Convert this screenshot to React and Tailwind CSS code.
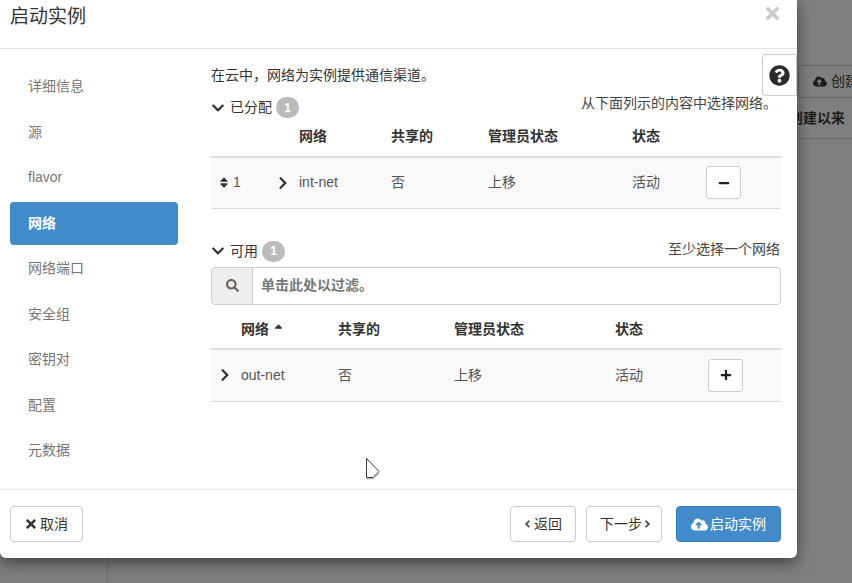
import {
  FaChevronDown,
  FaChevronRight,
  FaCloudUploadAlt,
  FaMinus,
  FaPlus,
  FaQuestionCircle,
  FaSearch,
  FaSort,
  FaSortUp,
  FaTimes,
  FaAngleLeft,
  FaAngleRight,
} from 'react-icons/fa';

const FONT = 'font-["Liberation_Sans","Noto_Sans_CJK_SC",sans-serif]';

const steps = ['详细信息', '源', 'flavor', '网络', '网络端口', '安全组', '密钥对', '配置', '元数据'];

function Badge() {
  return (
    <span className="ml-[4px] flex h-[21px] w-[23px] items-center justify-center rounded-full bg-[#bbbbbb] text-[12px] font-bold text-white">
      1
    </span>
  );
}

function SectionTitle({ label }) {
  return (
    <div className="flex items-center text-[14px] text-[#333333]">
      <FaChevronDown className="mr-[5px] h-[14px] w-[14px] text-[#333333]" />
      <span>{label}</span>
      <Badge />
    </div>
  );
}

function SquareButton({ children }) {
  return (
    <button className="flex h-[33px] w-[35px] items-center justify-center rounded-[3px] border border-[#cccccc] bg-white text-[#222222]">
      {children}
    </button>
  );
}

function AllocatedTable() {
  return (
    <table className="w-[570px] table-fixed border-collapse text-[14px]">
      <colgroup>
        <col className="w-[58px]" />
        <col className="w-[22px]" />
        <col className="w-[92px]" />
        <col className="w-[97px]" />
        <col className="w-[144px]" />
        <col className="w-[74px]" />
        <col className="w-[83px]" />
      </colgroup>
      <thead>
        <tr className="h-[39px] border-b-2 border-[#dddddd] text-left font-bold text-[#333333]">
          <th></th>
          <th></th>
          <th className="px-2 pb-[9px] align-bottom">网络</th>
          <th className="px-2 pb-[9px] align-bottom">共享的</th>
          <th className="px-2 pb-[9px] align-bottom">管理员状态</th>
          <th className="px-2 pb-[9px] align-bottom">状态</th>
          <th></th>
        </tr>
      </thead>
      <tbody>
        <tr className="h-[51px] border-b border-[#dddddd] bg-[#f9f9f9] text-[#555555]">
          <td className="px-2">
            <span className="flex items-center gap-[4px]">
              <FaSort className="h-[13px] w-[10px] text-[#333333]" />1
            </span>
          </td>
          <td className="px-2">
            <FaChevronRight className="h-[14px] w-[12px] text-[#333333]" />
          </td>
          <td className="px-2">int-net</td>
          <td className="px-2">否</td>
          <td className="px-2">上移</td>
          <td className="px-2">活动</td>
          <td className="px-2">
            <SquareButton>
              <FaMinus className="h-[12px] w-[12px]" />
            </SquareButton>
          </td>
        </tr>
      </tbody>
    </table>
  );
}

function AvailableTable() {
  return (
    <table className="w-[570px] table-fixed border-collapse text-[14px]">
      <colgroup>
        <col className="w-[22px]" />
        <col className="w-[97px]" />
        <col className="w-[116px]" />
        <col className="w-[161px]" />
        <col className="w-[93px]" />
        <col className="w-[81px]" />
      </colgroup>
      <thead>
        <tr className="h-[44px] border-b-2 border-[#dddddd] text-left font-bold text-[#333333]">
          <th></th>
          <th className="px-2 pb-[8px] align-bottom">
            <span className="flex items-center gap-[4px]">
              网络
              <FaSortUp className="h-[13px] w-[11px]" />
            </span>
          </th>
          <th className="px-2 pb-[8px] align-bottom">共享的</th>
          <th className="px-2 pb-[8px] align-bottom">管理员状态</th>
          <th className="px-2 pb-[8px] align-bottom">状态</th>
          <th></th>
        </tr>
      </thead>
      <tbody>
        <tr className="h-[53px] border-b border-[#dddddd] bg-[#f9f9f9] text-[#555555]">
          <td className="px-2">
            <FaChevronRight className="h-[14px] w-[12px] text-[#333333]" />
          </td>
          <td className="px-2">out-net</td>
          <td className="px-2">否</td>
          <td className="px-2">上移</td>
          <td className="px-2">活动</td>
          <td className="px-2">
            <SquareButton>
              <FaPlus className="h-[12px] w-[12px]" />
            </SquareButton>
          </td>
        </tr>
      </tbody>
    </table>
  );
}

function Footer() {
  const btn = 'flex h-[36px] items-center justify-center rounded-[4px] border text-[14px]';
  return (
    <div className="flex h-[69px] items-start justify-between border-t border-[#e5e5e5] px-[10px] pt-[16px]">
      <button className={`${btn} w-[73px] gap-[3px] border-[#cccccc] bg-white text-[#333333]`}>
        <FaTimes className="h-[14px] w-[12px]" />
        取消
      </button>
      <div className="mr-[6px] flex">
        <button className={`${btn} w-[66px] gap-[3px] border-[#cccccc] bg-white text-[#333333]`}>
          <FaAngleLeft className="h-[12px] w-[7px] text-[#555555]" />
          返回
        </button>
        <button className={`${btn} ml-[10px] w-[76px] gap-[2px] border-[#cccccc] bg-white pl-[3px] text-[#333333]`}>
          下一步
          <FaAngleRight className="h-[12px] w-[7px] text-[#555555]" />
        </button>
        <button className={`${btn} ml-[14px] w-[105px] gap-[2px] border-[#3b80bd] bg-[#428bca] text-white`}>
          <FaCloudUploadAlt className="h-[15px] w-[17px]" />
          启动实例
        </button>
      </div>
    </div>
  );
}

function Cursor() {
  return (
    <svg className="absolute left-[364px] top-[456px]" width="20" height="26" viewBox="0 0 20 26">
      <path d="M2.5 2.5 L2.5 21.5 L9 21.5 L15 15.5 Z" fill="#ffffff" stroke="#3a3a3a" strokeWidth="1" />
      <path d="M3 22.7 L9.5 22.7 L15.5 16.7" fill="none" stroke="#999999" strokeWidth="1" />
    </svg>
  );
}

export default function App() {
  return (
    <div className={`${FONT} relative flex h-[583px] w-[852px] overflow-hidden bg-[#7f7f7f]`}>
      <div className="w-[108px] shrink-0 border-r border-[#6e6e6e]" />
      <div className="min-w-0 flex-1 overflow-hidden whitespace-nowrap text-[14px] text-[#1c1c1c]">
        <div className="pl-[690px] pt-[65px]">
          <span className="flex h-[33px] w-[80px] items-center gap-[4px] rounded-l-[4px] border border-[#666666] pl-[14px]">
            <FaCloudUploadAlt className="h-[13px] w-[14px]" />
            创建
          </span>
        </div>
        <div className="mt-[10px] h-[31px] border-b border-[#6a6a6a] pl-[681px] font-bold">创建以来</div>
      </div>

      <div className="absolute left-0 top-0 flex h-[558px] w-[797px] flex-col rounded-b-[6px] bg-white shadow-[0_5px_15px_rgba(0,0,0,0.5)]">
        <div className="flex h-[49px] items-start justify-between border-b border-[#e5e5e5] pl-[10px] pr-[16px]">
          <h4 className="text-[19px] leading-[34px] text-[#333333]">启动实例</h4>
          <FaTimes className="mt-[4px] h-[19px] w-[17px] text-[#c9c9c9]" />
        </div>

        <div className="flex h-[440px]">
          <ul className="ml-[10px] w-[168px] pt-[16px] text-[14px] text-[#777777]">
            {steps.map((step) => (
              <li
                key={step}
                className={
                  step === '网络'
                    ? 'mb-[2.5px] flex h-[43px] items-center rounded-[4px] bg-[#428bca] pl-[18px] font-bold text-white'
                    : 'mb-[2.5px] flex h-[43px] items-center pl-[18px]'
                }
              >
                {step}
              </li>
            ))}
          </ul>

          <div className="ml-[33px] w-[570px] pt-[16px] text-[14px] text-[#333333]">
            <p className="h-[20px] leading-[20px]">在云中，网络为实例提供通信渠道。</p>
            <div className="mt-[12px] flex items-start justify-between">
              <SectionTitle label="已分配" />
              <span className="mr-[4px] mt-[-4px] text-[#444444]">从下面列示的内容中选择网络。</span>
            </div>
            <AllocatedTable />

            <div className="mt-[32px] flex items-start justify-between">
              <SectionTitle label="可用" />
              <span className="mr-[1px] mt-[-2px] text-[#444444]">至少选择一个网络</span>
            </div>
            <div className="mt-[5px] flex h-[38px] rounded-[4px] border border-[#cccccc]">
              <span className="flex w-[41px] items-center justify-center rounded-l-[4px] border-r border-[#cccccc] bg-[#eeeeee] text-[#6b6259]">
                <FaSearch className="h-[13px] w-[13px]" />
              </span>
              <span className="flex items-center pl-[8px] font-bold text-[#777777]">单击此处以过滤。</span>
            </div>
            <AvailableTable />
          </div>
        </div>

        <Footer />

        <div className="absolute left-[762px] top-[54px] flex h-[42px] w-[35px] items-center justify-center rounded-l-[4px] border border-[#cccccc] bg-white">
          <FaQuestionCircle className="h-[21px] w-[21px] text-[#2b2b2b]" />
        </div>
        <Cursor />
      </div>
    </div>
  );
}
